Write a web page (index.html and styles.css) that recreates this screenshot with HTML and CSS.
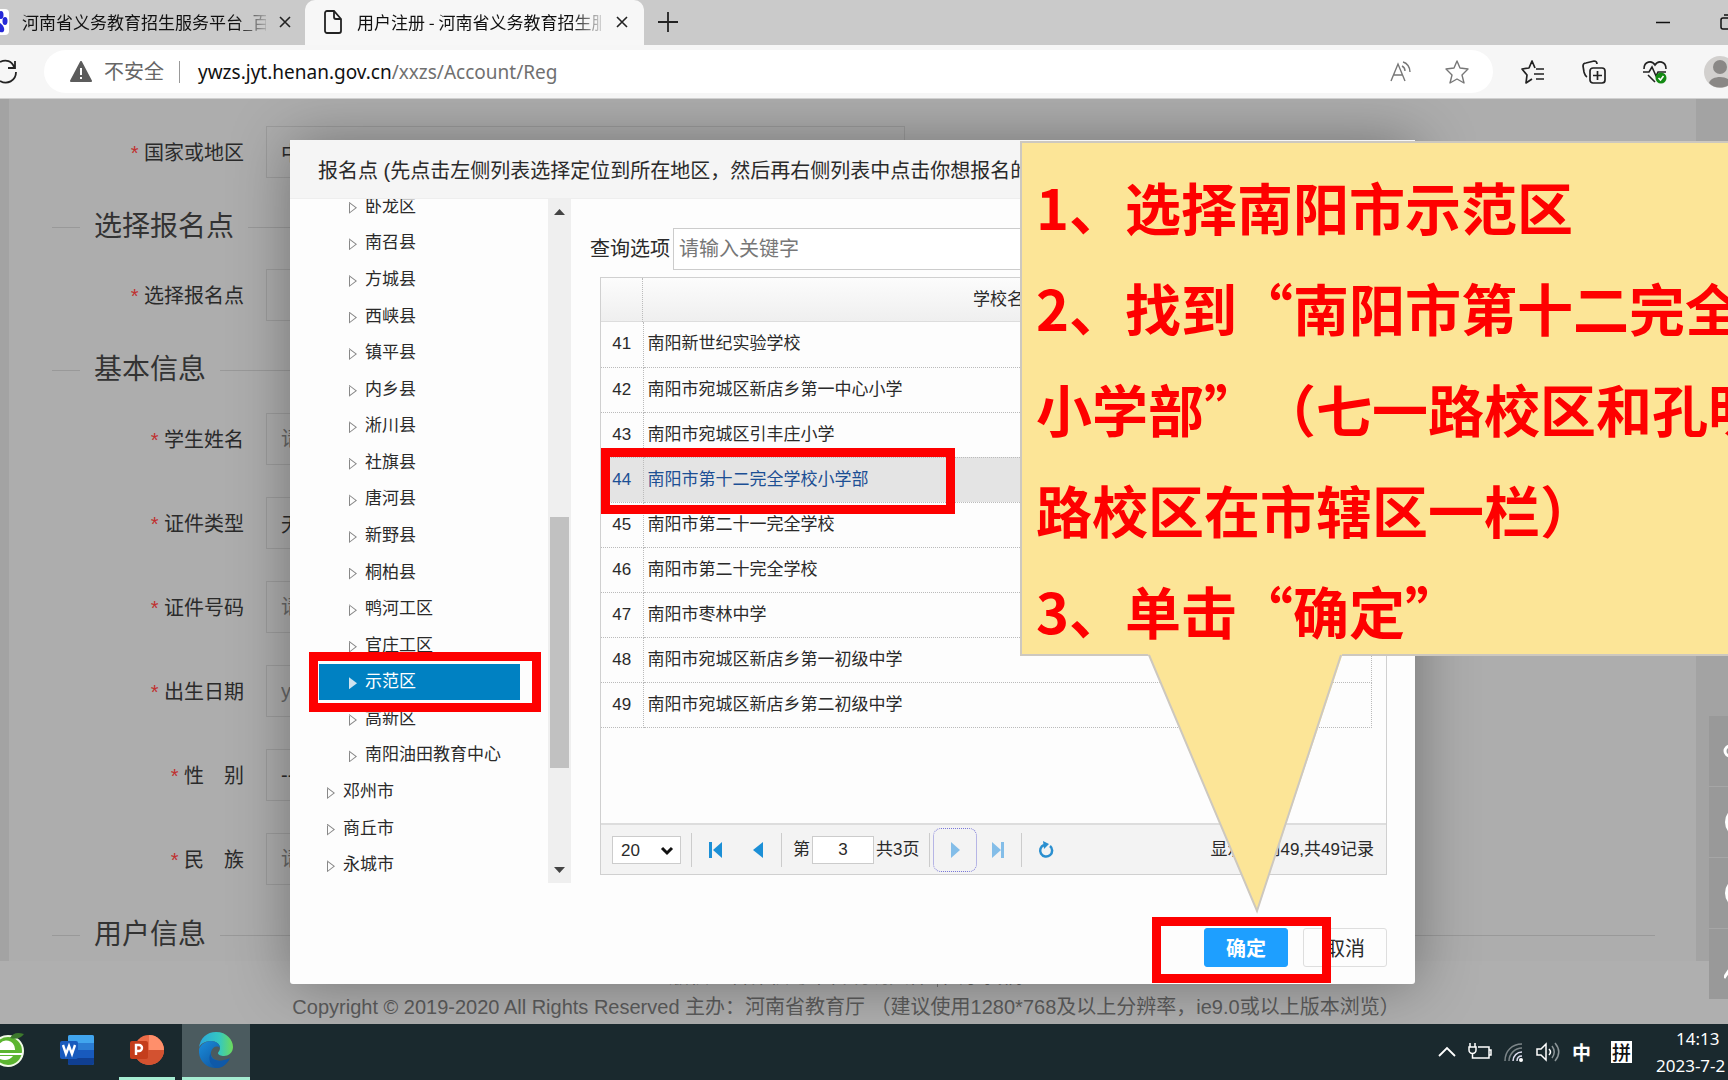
FILE: index.html
```html
<!DOCTYPE html>
<html lang="zh-CN">
<head>
<meta charset="utf-8">
<title>用户注册 - 河南省义务教育招生服务平台</title>
<link rel="stylesheet" href="styles.css">
</head>
<body>
<header class="tabs">
  <div class="tab tab-first">
    <svg class="paw" width="9" height="26" viewBox="0 0 9 26"><path d="M0 0h5a4 4 0 0 1 4 4v18a4 4 0 0 1-4 4H0z" fill="#fff"/><ellipse cx="1" cy="6" rx="2.500" ry="4" fill="#2529d8"/><ellipse cx="5" cy="12" rx="2.500" ry="4" fill="#2529d8"/><path d="M0 14c3 2 5 5 4 8-1 2-3 1-4 1z" fill="#2529d8"/></svg>
    <span class="tab-title">河南省义务教育招生服务平台_百</span>
    <button class="icon-btn" aria-label="关闭标签页"><svg width="12" height="12" viewBox="0 0 12 12"><path d="M1 1l10 10M11 1L1 11" stroke="#222" stroke-width="1.600"/></svg></button>
  </div>
  <div class="tab tab-active">
    <svg width="18" height="24" viewBox="0 0 18 24" fill="none" stroke="#222" stroke-width="1.800"><path d="M3 1h7l7 8v12a2 2 0 0 1-2 2H3a2 2 0 0 1-2-2V3a2 2 0 0 1 2-2z"/><path d="M10 1v6a2 2 0 0 0 2 2h5"/></svg>
    <span class="tab-title">用户注册 - 河南省义务教育招生服</span>
    <button class="icon-btn" aria-label="关闭标签页"><svg width="12" height="12" viewBox="0 0 12 12"><path d="M1 1l10 10M11 1L1 11" stroke="#222" stroke-width="1.600"/></svg></button>
  </div>
  <button class="icon-btn new-tab" aria-label="新建标签页"><svg width="20" height="20" viewBox="0 0 20 20"><path d="M10 0v20M0 10h20" stroke="#222" stroke-width="1.800"/></svg></button>
  <button class="icon-btn win-min" aria-label="最小化"><svg width="14" height="16" viewBox="0 0 14 16"><path d="M0 8.500h14" stroke="#111" stroke-width="1.500"/></svg></button>
  <button class="icon-btn" aria-label="还原"><svg width="8" height="16" viewBox="0 0 8 16" fill="none" stroke="#111" stroke-width="1.500"><path d="M8 4H3a2 2 0 0 0-2 2v7a2 2 0 0 0 2 2h5M4 1h4"/></svg></button>
</header>

<nav class="toolbar">
  <button class="icon-btn" aria-label="刷新"><svg width="18" height="26" viewBox="0 0 18 26" fill="none" stroke="#222" stroke-width="1.800"><path d="M0 3c6-3 12-1 14 5M15 2v7H8M16 13c0 9-9 13-16 9"/></svg></button>
  <div class="address">
    <svg width="22" height="22" viewBox="0 0 22 22"><path d="M11 1L21 20H1z" fill="#5c5c5c" stroke="#5c5c5c" stroke-width="2" stroke-linejoin="round"/><path d="M11 7v7M11 16v2" stroke="#fff" stroke-width="2"/></svg>
    <span class="insecure">不安全</span>
    <span class="address-sep"></span>
    <span class="url">ywzs.jyt.henan.gov.cn<span class="url-path">/xxzs/Account/Reg</span></span>
    <button class="icon-btn" aria-label="大声朗读"><svg width="22" height="22" viewBox="0 0 22 22" fill="none" stroke="#777" stroke-width="1.400"><path d="M1 20L8 3l7 17M4 14h8M12 5c2 1 3 3 3 5M13 1c4 1 7 5 7 10"/></svg></button>
    <button class="icon-btn" aria-label="收藏"><svg width="24" height="24" viewBox="0 0 24 24" fill="none" stroke="#777" stroke-width="1.400" stroke-linejoin="round"><path d="M12 1l3 7 8 1-6 6 2 8-7-4-7 4 2-8-6-6 8-1z"/></svg></button>
  </div>
  <div class="tools">
    <button class="icon-btn" aria-label="收藏夹"><svg width="24" height="24" viewBox="0 0 24 24" fill="none" stroke="#222" stroke-width="1.700" stroke-linejoin="round"><path d="M14 8l-3-7-3 7-7 1 5 6-1 8 6-4M15 9h8M13 14h10M15 19h8"/></svg></button>
    <button class="icon-btn" aria-label="集锦"><svg width="24" height="24" viewBox="0 0 24 24" fill="none" stroke="#222" stroke-width="1.700"><rect x="8" y="8" width="15" height="15" rx="3"/><path d="M15.500 11v9M11 15.500h9M5 17c-2-1-2-2-3-5L1 6c0-2 1-3 3-3l8-2c2 0 3 1 3 3"/></svg></button>
    <button class="icon-btn" aria-label="浏览器概要"><svg width="24" height="24" viewBox="0 0 24 24" fill="none" stroke="#222" stroke-width="1.600"><path d="M1 9C1 1 9 0 12 5c3-5 11-4 11 4M0 12h6l3-5 4 9 2-4h8M5 15l7 7"/><circle cx="18" cy="18" r="5.500" fill="#138a13" stroke="none"/><path d="M15.500 18l2 2 3-4" stroke="#fff"/></svg></button>
    <svg class="avatar" width="24" height="32" viewBox="0 0 24 32"><circle cx="16" cy="16" r="16" fill="#d2d0ce"/><circle cx="16" cy="11" r="7" fill="#8a8886"/><path d="M5 27c2-8 20-8 22 0-5 6-17 6-22 0z" fill="#8a8886"/></svg>
  </div>
</nav>

<main class="page">
  <form class="register">
    <div class="row"><label for="f1"><i>*</i> 国家或地区</label><input id="f1" value="中国"></div>
    <h2 class="section">选择报名点</h2>
    <div class="row"><label for="f2"><i>*</i> 选择报名点</label><input id="f2"></div>
    <h2 class="section">基本信息</h2>
    <div class="fields">
      <div class="row"><label for="f3"><i>*</i> 学生姓名</label><input id="f3" placeholder="请输入"></div>
      <div class="row"><label for="f4"><i>*</i> 证件类型</label><input id="f4" value="无证件"></div>
      <div class="row"><label for="f5"><i>*</i> 证件号码</label><input id="f5" placeholder="请输入"></div>
      <div class="row"><label for="f6"><i>*</i> 出生日期</label><input id="f6" placeholder="yyyy-MM-dd"></div>
      <div class="row"><label for="f7"><i>*</i> 性　别</label><input id="f7" value="--"></div>
      <div class="row"><label for="f8"><i>*</i> 民　族</label><input id="f8" placeholder="请选择"></div>
    </div>
    <h2 class="section">用户信息</h2>
  </form>
  <footer class="site-footer">
    <div>版权、著作权与平台说明文件<span class="about">关于我们</span></div>
    <div>Copyright © 2019-2020 All Rights Reserved 主办：河南省教育厅 （建议使用1280*768及以上分辨率，ie9.0或以上版本浏览）</div>
  </footer>

  <aside class="side">
    <span><svg width="6" height="16" viewBox="0 0 6 16"><circle cx="8" cy="8" r="5" fill="none" stroke="#fff" stroke-width="3"/></svg></span>
    <span><svg width="4" height="34" viewBox="0 0 4 34"><circle cx="17" cy="17" r="16" fill="#fff"/></svg></span>
    <span><svg width="4" height="34" viewBox="0 0 4 34"><circle cx="17" cy="17" r="16" fill="#fff"/></svg></span>
    <span class="to-top"><svg width="4" height="10" viewBox="0 0 4 10"><path d="M0 9l6-9" stroke="#fff" stroke-width="3"/></svg></span>
  </aside>

  <section class="modal" role="dialog" aria-labelledby="modal-title">
    <h1 class="modal-title" id="modal-title">报名点 (先点击左侧列表选择定位到所在地区，然后再右侧列表中点击你想报名的</h1>
    <div class="modal-body">
      <div class="tree-pane">
        <ul class="tree">
          <li>卧龙区</li><li>南召县</li><li>方城县</li><li>西峡县</li><li>镇平县</li><li>内乡县</li><li>淅川县</li><li>社旗县</li><li>唐河县</li><li>新野县</li><li>桐柏县</li><li>鸭河工区</li><li>官庄工区</li><li class="selected">示范区</li><li>高新区</li><li>南阳油田教育中心</li><li class="city">邓州市</li><li class="city">商丘市</li><li class="city">永城市</li>
        </ul>
        <div class="scrollbar">
          <svg width="11" height="6" viewBox="0 0 11 6"><path d="M0 6L5.500 0 11 6z" fill="#444"/></svg>
          <span class="thumb"></span>
          <svg width="11" height="6" viewBox="0 0 11 6"><path d="M0 0l5.500 6L11 0z" fill="#444"/></svg>
        </div>
        <div class="mark mark-tree"></div>
      </div>
      <div class="list-pane">
        <div class="search"><label for="kw">查询选项</label><input id="kw" placeholder="请输入关键字"></div>
        <div class="grid">
          <div class="grid-head"><span></span><span>学校名称</span></div>
          <div class="grid-body">
            <table>
              <tbody>
                <tr><td>41</td><td>南阳新世纪实验学校</td></tr>
                <tr><td>42</td><td>南阳市宛城区新店乡第一中心小学</td></tr>
                <tr><td>43</td><td>南阳市宛城区引丰庄小学</td></tr>
                <tr class="picked"><td>44</td><td>南阳市第十二完全学校小学部</td></tr>
                <tr><td>45</td><td>南阳市第二十一完全学校</td></tr>
                <tr><td>46</td><td>南阳市第二十完全学校</td></tr>
                <tr><td>47</td><td>南阳市枣林中学</td></tr>
                <tr><td>48</td><td>南阳市宛城区新店乡第一初级中学</td></tr>
                <tr><td>49</td><td>南阳市宛城区新店乡第二初级中学</td></tr>
              </tbody>
            </table>
            <div class="mark mark-row"></div>
          </div>
          <div class="pager">
            <div class="size"><select aria-label="每页条数"><option>20</option></select><svg width="14" height="10" viewBox="0 0 14 10"><path d="M2 2l5 5 5-5" fill="none" stroke="#111" stroke-width="3"/></svg></div>
            <span class="bar"></span>
            <button class="pg" aria-label="首页"><svg width="14" height="16" viewBox="0 0 14 16" fill="#1b8fd6"><path d="M0 0h3v16H0zM13 0v16L4 8z"/></svg></button>
            <button class="pg" aria-label="上一页"><svg width="14" height="16" viewBox="0 0 14 16" fill="#1b8fd6"><path d="M12 0v16L2 8z"/></svg></button>
            <span class="bar"></span>
            <label class="pageno">第<input value="3">共3页</label>
            <span class="bar"></span>
            <button class="pg focus" aria-label="下一页"><svg width="14" height="16" viewBox="0 0 14 16" fill="#83bde8"><path d="M3 0v16l9-8z"/></svg></button>
            <button class="pg" aria-label="末页"><svg width="14" height="16" viewBox="0 0 14 16" fill="#83bde8"><path d="M1 0v16l9-8zM10 0h3v16h-3z"/></svg></button>
            <span class="bar"></span>
            <button class="pg" aria-label="刷新"><svg width="16" height="18" viewBox="0 0 16 18" fill="none" stroke="#2a8fd0" stroke-width="2.500"><path d="M12 5a6 6 0 1 1-6-1"/><path d="M5 0l6 3-5 5z" fill="#2a8fd0" stroke="none"/></svg></button>
            <span class="summary">显示41到49,共49记录</span>
          </div>
        </div>
      </div>
    </div>
    <div class="actions">
      <button class="btn ok">确定</button>
      <button class="btn">取消</button>
      <div class="mark mark-ok"></div>
    </div>
  </section>
</main>

<footer class="taskbar">
  <div class="apps">
    <button class="app app-first" aria-label="浏览器"><svg width="26" height="38" viewBox="0 0 26 38"><circle cx="8" cy="20" r="16" fill="#f2fbe8"/><circle cx="8" cy="20" r="14" fill="#5cb531"/><path d="M0 14c4-6 13-4 14 4H0zM0 23h22" fill="#fff" stroke="#fff" stroke-width="2"/><path d="M0 28c5 2 10 1 13-3H0z" fill="#fff"/><path d="M10 7c3-5 7-6 14-4-3 4-8 6-14 4z" fill="#3d7a2d"/></svg></button>
    <button class="app" aria-label="Word"><svg width="34" height="32" viewBox="0 0 34 32"><rect x="8" y="1" width="26" height="30" rx="2" fill="#2b7cd3"/><path d="M8 3a2 2 0 0 1 2-2h22a2 2 0 0 1 2 2v6H8z" fill="#41a5ee"/><path d="M8 16h26v8H8z" fill="#185abd"/><path d="M8 24h26v5a2 2 0 0 1-2 2H10a2 2 0 0 1-2-2z" fill="#103f91"/><rect y="7" width="18" height="18" rx="2" fill="#185abd"/><path d="M3 11l3 9 3-8 3 8 3-9" fill="none" stroke="#fff" stroke-width="2.400"/></svg></button>
    <button class="app running" aria-label="PowerPoint"><svg width="34" height="32" viewBox="0 0 34 32"><circle cx="19" cy="16" r="15" fill="#ed6c47"/><path d="M19 1a15 15 0 0 1 15 15H19z" fill="#ff8f6b"/><path d="M4 16h30a15 15 0 0 1-30 0z" fill="#d35230"/><rect y="7" width="18" height="18" rx="2" fill="#c43e1c"/><path d="M6 21V11h3a3 3 0 0 1 0 6H6" fill="none" stroke="#fff" stroke-width="2.400"/></svg></button>
    <button class="app current" aria-label="Edge"><svg width="34" height="36" viewBox="0 0 34 36"><defs><linearGradient id="ea" x1="0" x2="1"><stop offset="0" stop-color="#2aa7dc"/><stop offset=".6" stop-color="#35c8c0"/><stop offset="1" stop-color="#6ddb5a"/></linearGradient><linearGradient id="eb" x1="0" y1="0" x2="1" y2="1"><stop offset="0" stop-color="#1b8ddb"/><stop offset="1" stop-color="#0c4a94"/></linearGradient></defs><path d="M0 16C1 6 8 0 17 0c11 0 17 8 17 15 0 6-5 9-9 9-3 0-6-1-6-3 0-1 2-2 2-5 0-4-4-7-9-7C6 9 1 12 0 16z" fill="url(#ea)"/><path d="M0 17c2-5 7-8 12-8 5 0 9 3 9 7-3-3-8-1-9 4-1 7 7 11 18 8-3 5-8 8-13 8C7 36-1 28 0 17z" fill="url(#eb)"/><path d="M12 20c-2 7 6 12 19 6-3 6-8 10-13 10-6-2-10-8-6-16z" fill="#0f59a8"/></svg></button>
  </div>
  <div class="tray">
    <svg width="18" height="24" viewBox="0 0 18 24"><path d="M1 16l8-8 8 8" fill="none" stroke="#fff" stroke-width="1.800"/></svg>
    <svg width="24" height="24" viewBox="0 0 24 24" fill="none" stroke="#fff" stroke-width="1.500"><path d="M10 7h11v11H9M21 10h2v5h-2M2 3v4M7 3v4M1 7h7v3a3 3 0 0 1-7 0zM4.500 13v5H9"/></svg>
    <svg width="20" height="24" viewBox="0 0 20 24" fill="none" stroke-width="1.500"><path d="M1 21C1 11 8 4 18 4M5 21c0-7 6-13 13-13" stroke="#7c8588"/><path d="M9 21c0-5 4-9 9-9M13 21c0-3 2-5 5-5" stroke="#dde"/><circle cx="17" cy="20" r="2" fill="#fff"/></svg>
    <svg width="24" height="24" viewBox="0 0 24 24" fill="none" stroke="#fff" stroke-width="1.500"><path d="M1 9h4l5-5v16l-5-5H1zM13 9c2 2 2 4 0 6"/><path d="M16 6c3 4 3 8 0 12M19 3c5 6 5 12 0 18" stroke="#8b9497"/></svg>
    <span class="ime">中</span>
    <span class="pinyin">拼</span>
    <span class="clock"><span>14:13</span><span>2023-7-2</span></span>
  </div>
</footer>

<div class="callout">
  <p>1、选择南阳市示范区</p>
  <p>2、找到“南阳市第十二完全</p>
  <p>小学部”（七一路校区和孔明</p>
  <p>路校区在市辖区一栏）</p>
  <p>3、单击“确定”</p>
  <svg class="tail" width="194" height="260" viewBox="0 0 194 260"><path d="M0 0h194v2L109 258 1 2z" fill="#fce597"/><path d="M1 1l108 256L193 1" fill="none" stroke="#cdc8bf" stroke-width="2"/></svg>
</div>
</body>
</html>
```

FILE: styles.css
```css
* { box-sizing: border-box; }

body {
  margin: 0;
  min-height: 100vh;
  display: flex;
  flex-direction: column;
  position: relative;
  overflow: hidden;
  font: 20px/28px "Liberation Sans", "Noto Sans CJK SC", sans-serif;
  color: #2a2a2a;
  background: #afafaf;
}

button, input, select { font: inherit; color: inherit; margin: 0; }
h1, h2, p, ul { margin: 0; padding: 0; }
h1, h2 { font-weight: 400; }
svg { display: block; flex: none; }
.icon-btn { border: 0; background: none; padding: 0; flex: none; }

/* Browser tabs */
.tabs {
  height: 45px;
  padding-bottom: 2px;
  display: flex;
  align-items: center;
  background: #cacaca;
  font: 17px/24px "Noto Sans CJK SC", sans-serif;
  color: #111;
}
.tab { display: flex; align-items: center; height: 43px; flex: none; }
.tab-first { width: 305px; gap: 13px; }
.tab-active {
  width: 339px;
  padding-left: 19px;
  gap: 15px;
  background: #f7f7f7;
  border-radius: 10px 10px 0 0;
  box-shadow: 0 2px #f7f7f7;
}
.tab-title {
  width: 244px;
  white-space: nowrap;
  overflow: hidden;
  -webkit-mask-image: linear-gradient(90deg, #000 215px, transparent 250px);
  mask-image: linear-gradient(90deg, #000 215px, transparent 250px);
}
.new-tab { margin-left: 14px; }
.win-min { margin-left: auto; margin-right: 50px; }

/* Address bar */
.toolbar {
  height: 54px;
  display: flex;
  align-items: center;
  background: #f6f6f6;
  border-bottom: 1px solid #d0d0d0;
}
.address {
  flex: 1;
  height: 43px;
  margin-left: 26px;
  padding: 0 24px 0 26px;
  display: flex;
  align-items: center;
  background: #fff;
  border-radius: 22px;
}
.insecure { margin-left: 12px; color: #666; }
.address-sep { width: 1px; height: 22px; margin: 0 18px 0 15px; background: #999; }
.url { flex: 1; font-family: "Noto Sans", sans-serif; font-size: 19px; color: #111; }
.url-path { color: #707070; }
.address .icon-btn + .icon-btn { margin-left: 33px; }
.tools { display: flex; align-items: center; gap: 37px; padding-left: 28px; }

/* Registration page */
.page { flex: 1; position: relative; overflow: hidden; }
.register {
  margin: 0 32px 0 9px;
  padding: 27px 41px 5px 0;
  background: #adadad;
  box-shadow: -9px 0 #a3a3a3, 32px 0 #a3a3a3;
}
.row { display: flex; align-items: center; gap: 22px; }
.row label { width: 235px; padding-top: 2px; text-align: right; }
.row i { font-style: normal; color: #c03030; }
.row input {
  width: 639px;
  height: 52px;
  padding: 0 14px;
  background: #adadad;
  border: 1px solid #9c9c9c;
}
.row input::placeholder { color: #666; }
.fields { display: grid; gap: 32px; padding: 1px 0; }
.section {
  display: flex;
  align-items: center;
  gap: 14px;
  margin: 28px 0 21px 43px;
  font-size: 28px;
  line-height: 42px;
  color: #333;
}
.section::before, .section::after { content: ""; height: 1px; background: #999; }
.section::before { width: 28px; }
.section::after { flex: 1; }
.section:last-child { margin-bottom: 0; }
.site-footer { text-align: center; color: #5c5c5c; line-height: 31px; padding-right: 36px; }
.about { margin-left: 8px; padding-left: 5px; border-left: 1px solid #777; color: #222; }

.side {
  position: absolute;
  right: 0;
  top: 617px;
  display: grid;
  gap: 1px;
  width: 19px;
  background: #a6a6a6;
}
.side span { height: 70px; display: flex; align-items: center; justify-content: flex-end; background: #999; }
.side .to-top { padding-top: 20px; }

/* Dialog */
.modal {
  position: absolute;
  left: 290px;
  top: 41px;
  width: 1125px;
  background: #fdfdfd;
  border-radius: 3px;
  box-shadow: 1px 1px 60px rgba(0, 0, 0, .35);
}
.modal-title {
  padding: 17px 0 13px 28px;
  font-size: 20px;
  background: #f5f5f5;
  border-bottom: 1px solid #eee;
  white-space: nowrap;
  overflow: hidden;
}
.modal-body { display: flex; font-size: 17px; }
.tree-pane { position: relative; width: 281px; display: flex; height: 684px; }
.tree {
  flex: 1;
  list-style: none;
  height: 695px;
  margin-top: -11px;
  padding: 0 28px 0 29px;
  display: grid;
  grid-auto-rows: 1fr;
  clip-path: inset(11px 0 0 0);
}
.tree li { display: flex; align-items: center; padding: 1px 0 0 30px; line-height: 24px; }
.tree li::before {
  content: "";
  width: 8px;
  height: 12px;
  margin: 2px 8px 0 0;
  background: #888;
  clip-path: polygon(0 0, 100% 50%, 0 100%, 0 15%, 1px 15%, 1px 85%, 80% 50%, 0 10%);
}
.tree .city { padding-left: 8px; }
.tree .selected { background: #0081c2; color: #fff; }
.tree .selected::before { background: #cfe3ef; clip-path: polygon(0 0, 100% 50%, 0 100%); }
.scrollbar {
  width: 23px;
  padding: 10px 2px;
  display: flex;
  flex-direction: column;
  align-items: center;
  background: #efefef;
}
.thumb { width: 19px; height: 251px; margin: 302px 0 auto; background: #c1c1c1; }

.mark { position: absolute; border: 9px solid #fe0000; pointer-events: none; }
.mark-tree { left: 19px; top: 453px; width: 232px; height: 60px; }
.mark-row { left: 0; top: 126px; width: 354px; height: 66px; }
.mark-ok { left: 862px; top: 34px; width: 179px; height: 66px; }

.list-pane { flex: 1; padding: 29px 28px 8px 19px; }
.search { display: flex; align-items: center; gap: 3px; font-size: 20px; }
.search label { width: 80px; }
.search input { flex: 1; height: 42px; padding: 0 5px; border: 1px solid #ccc; background: #fff; }
.search input::placeholder { color: #777; }
.grid { margin: 7px 0 0 10px; border: 1px solid #d0d0d0; background: #fdfdfd; }
.grid-head {
  display: grid;
  grid-template-columns: 42px 1fr;
  height: 44px;
  padding-right: 15px;
  line-height: 44px;
  text-align: center;
  background: linear-gradient(#fcfcfc, #efefef);
  border-bottom: 1px solid #ddd;
}
.grid-head span:first-child { border-right: 1px dotted #bbb; }
.grid-body { position: relative; height: 501px; padding-right: 14px; }
table { width: 100%; border-collapse: collapse; table-layout: fixed; }
td { height: 45px; padding: 0 4px; line-height: 24px; border: 1px dotted #bbb; border-top: 0; }
td:first-child { width: 42px; padding: 0; text-align: center; border-left: 0; }
.picked { background: #e4e4e4; color: #1c4f94; }

.pager {
  display: flex;
  align-items: center;
  height: 51px;
  padding: 0 12px 0 11px;
  background: #f3f3f3;
  border-top: 2px solid #ddd;
}
.size { position: relative; }
.size select {
  display: block;
  width: 69px;
  height: 28px;
  padding: 0 8px;
  appearance: none;
  background: #fff;
  border: 1px solid #ccc;
  border-radius: 0;
}
.size svg { position: absolute; right: 7px; top: 10px; }
.bar { width: 1px; height: 34px; margin: 0 10px; background: #ccc; }
.pg { width: 42px; height: 44px; padding: 0; border: 0; background: none; display: grid; place-items: center; flex: none; }
.bar + .pg { margin-left: -7px; }
.pg + .bar { margin-left: 2px; }
.pg.focus { width: 44px; border: 1px dotted #7a78d8; border-radius: 8px; }
.pageno { display: flex; align-items: center; gap: 2px; padding-left: 1px; }
.pageno input { width: 62px; height: 28px; padding: 0; text-align: center; background: #fff; border: 1px solid #ccc; }
.summary { margin-left: auto; }

.actions {
  position: relative;
  display: flex;
  justify-content: flex-end;
  gap: 15px;
  padding: 45px 28px 17px;
}
.btn { width: 84px; height: 39px; padding: 2px 0 0; background: #fdfdfd; border: 1px solid #dedede; border-radius: 3px; }
.btn.ok { background: #1e9fff; border-color: #1e9fff; color: #fff; font-weight: 700; }

/* Taskbar */
.taskbar {
  height: 56px;
  flex: none;
  display: flex;
  justify-content: space-between;
  background: #1a292e;
  color: #fff;
}
.apps { display: flex; }
.app { width: 68px; padding: 0 0 2px; display: grid; place-items: center; background: none; border: 0; border-bottom: 3px solid transparent; }
.app-first { width: 43px; justify-items: start; }
.running { width: 56px; margin: 0 7px 0 8px; border-color: #a5ecd2; }
.current { background: #4b5b5f; border-color: #a5ecd2; }
.tray { display: flex; align-items: center; gap: 12px; }
.ime { font: 700 19px/24px "Noto Sans CJK SC", sans-serif; }
.pinyin { width: 21px; margin: 0 12px 0 8px; font: 500 19px/22px "Noto Sans CJK SC", sans-serif; color: #111; background: #fff; text-align: center; }
.clock { width: 72px; display: grid; font: 17px/27px "Noto Sans", sans-serif; white-space: nowrap; }
.clock span:first-child { padding-left: 20px; }

/* Instruction callout */
.callout {
  position: absolute;
  left: 1020px;
  right: -20px;
  top: 141px;
  display: grid;
  gap: 12px;
  padding: 18px 0 0 14px;
  background: #fce597;
  border: 2px solid #cdc8bf;
  font: 700 56px/89px "Noto Sans CJK SC", sans-serif;
  color: #fe0000;
  white-space: nowrap;
  text-spacing-trim: space-all;
}
.tail { position: absolute; left: 126px; top: 100%; }
```
